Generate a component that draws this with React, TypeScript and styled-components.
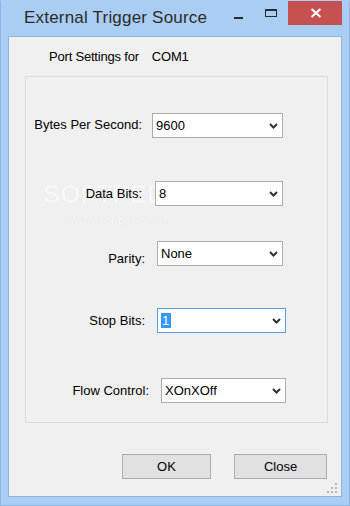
import React from "react";
import styled, { createGlobalStyle } from "styled-components";

const GlobalStyle = createGlobalStyle`
  html, body { margin: 0; padding: 0; background: #ffffff; }
  body { font-family: "Liberation Sans", Arial, sans-serif; }
  * { box-sizing: border-box; }
`;

const Window = styled.div`
  width: 350px;
  height: 506px;
  background: #aacdf3;
  border: 1px solid #8db5e3;
  border-top-color: #aacdf3;
  padding: 0 7px 8px 7px;
  display: flex;
  flex-direction: column;
`;

const TitleBar = styled.div`
  height: 35px;
  display: flex;
  align-items: flex-start;
`;

const Title = styled.div`
  margin: 7px 0 0 16px;
  font-family: "Liberation Sans", Arial, sans-serif;
  font-size: 17px;
  line-height: 20px;
  color: #2b2b2b;
  white-space: nowrap;
  letter-spacing: 0.2px;
`;

const CaptionButtons = styled.div`
  margin-left: auto;
  display: flex;
  align-items: flex-start;
`;

const CaptionButton = styled.div<{ $w: number; $danger?: boolean }>`
  width: ${(p) => p.$w}px;
  height: 24px;
  background: ${(p) => (p.$danger ? "#c75050" : "transparent")};
  display: flex;
`;

const Client = styled.div`
  flex: 1;
  position: relative;
  background: #f0f0f0;
  border: 1px solid #8fb4de;
  padding: 12px 0 0 16px;
  display: flex;
  flex-direction: column;
  font-family: "Liberation Sans", Arial, sans-serif;
  font-size: 13px;
  color: #000;
`;

const Header = styled.div`
  margin-left: 24px;
  height: 16px;
  line-height: 16px;
  display: flex;
  gap: 13px;
  letter-spacing: -0.2px;
`;

const GroupBox = styled.div`
  position: relative;
  z-index: 1;
  margin-top: 11px;
  width: 303px;
  height: 347px;
  border: 1px solid #dcdcdc;
  display: flex;
  flex-direction: column;
`;

const Row = styled.div<{ $top: number }>`
  margin-top: ${(p) => p.$top}px;
  height: 25px;
  display: flex;
  align-items: center;
`;

const Label = styled.div<{ $w: number; $dy: number }>`
  width: ${(p) => p.$w}px;
  text-align: right;
  white-space: nowrap;
  line-height: 16px;
  position: relative;
  top: ${(p) => p.$dy}px;
`;

const Combo = styled.div<{ $ml: number; $w: number; $focus?: boolean }>`
  margin-left: ${(p) => p.$ml}px;
  width: ${(p) => p.$w}px;
  height: 25px;
  background: #ffffff;
  border: 1px solid ${(p) => (p.$focus ? "#569de5" : "#acacac")};
  display: flex;
  align-items: center;
  justify-content: space-between;
  padding: 0 4px 0 3px;
  line-height: 16px;
`;

const Selected = styled.span`
  background: #3399ff;
  color: #ffffff;
  padding: 0 2px 0 1px;
`;

const ButtonRow = styled.div`
  margin: 31px 0 0 97px;
  display: flex;
  gap: 23px;
`;

const Button = styled.div<{ $w: number }>`
  width: ${(p) => p.$w}px;
  height: 25px;
  background: #e1e1e1;
  border: 1px solid #adadad;
  display: flex;
  align-items: center;
  justify-content: center;
  font-size: 13px;
`;

const Watermark = styled.div`
  position: absolute;
  z-index: 0;
  left: 34px;
  top: 143px;
  pointer-events: none;
  display: flex;
  flex-direction: column;
  align-items: flex-start;
`;

const WmBig = styled.div`
  font-family: "Liberation Sans", Arial, sans-serif;
  font-weight: bold;
  font-size: 26px;
  color: rgba(255, 255, 255, 0.8);
  text-shadow: 0 0 1px rgba(0, 0, 0, 0.1);
  line-height: 28px;
  sup {
    font-size: 8px;
    vertical-align: top;
    font-weight: normal;
    margin-left: 2px;
  }
`;

const WmSmall = styled.div`
  margin: 6px 0 0 27px;
  font-family: "Liberation Sans", sans-serif;
  font-size: 11px;
  color: rgba(255, 255, 255, 0.85);
  text-shadow: 0 0 1px rgba(0, 0, 0, 0.12);
  letter-spacing: 0.5px;
`;

const Grip = styled.div`
  position: absolute;
  right: 2px;
  bottom: 1px;
  display: flex;
`;

const Chevron = () => (
  <svg width="9" height="6" viewBox="0 0 9 6">
    <path d="M1 1 L4.5 4.5 L8 1" fill="none" stroke="#333" strokeWidth="2" />
  </svg>
);

type RowDef = {
  label: string;
  value: string;
  top: number;
  labelW: number;
  comboMl: number;
  comboW: number;
  dy: number;
  focus?: boolean;
};

const rows: RowDef[] = [
  { label: "Bytes Per Second:", value: "9600", top: 36, labelW: 116, comboMl: 10, comboW: 131, dy: -1 },
  { label: "Data Bits:", value: "8", top: 43, labelW: 116, comboMl: 13, comboW: 128, dy: 0 },
  { label: "Parity:", value: "None", top: 35, labelW: 119, comboMl: 12, comboW: 126, dy: 5 },
  { label: "Stop Bits:", value: "1", top: 42, labelW: 119, comboMl: 12, comboW: 129, dy: 0, focus: true },
  { label: "Flow Control:", value: "XOnXOff", top: 45, labelW: 123, comboMl: 12, comboW: 125, dy: 0 },
];

export default function App() {
  return (
    <>
      <GlobalStyle />
      <Window>
        <TitleBar>
          <Title>External Trigger Source</Title>
          <CaptionButtons>
            <CaptionButton $w={29}>
              <svg width="29" height="24" viewBox="0 0 29 24">
                <rect x="10" y="16" width="9" height="2" fill="#2b2b2b" />
              </svg>
            </CaptionButton>
            <CaptionButton $w={35}>
              <svg width="35" height="24" viewBox="0 0 35 24">
                <rect x="12.5" y="8.5" width="11" height="7" fill="none" stroke="#2b2b2b" strokeWidth="1" />
                <rect x="12" y="8" width="12" height="2" fill="#2b2b2b" />
              </svg>
            </CaptionButton>
            <CaptionButton $w={54} $danger>
              <svg width="54" height="24" viewBox="0 0 54 24">
                <path d="M23.5 8 L32.5 16 M32.5 8 L23.5 16" stroke="#ffffff" strokeWidth="2" />
              </svg>
            </CaptionButton>
          </CaptionButtons>
        </TitleBar>
        <Client>
          <Watermark>
            <WmBig>
              SOFTPEDIA<sup>™</sup>
            </WmBig>
            <WmSmall>www.softpedia.com</WmSmall>
          </Watermark>
          <Header>
            <span>Port Settings for</span>
            <span>COM1</span>
          </Header>
          <GroupBox>
            {rows.map((r) => (
              <Row key={r.label} $top={r.top}>
                <Label $w={r.labelW} $dy={r.dy}>{r.label}</Label>
                <Combo $ml={r.comboMl} $w={r.comboW} $focus={r.focus}>
                  <span>{r.focus ? <Selected>{r.value}</Selected> : r.value}</span>
                  <Chevron />
                </Combo>
              </Row>
            ))}
          </GroupBox>
          <ButtonRow>
            <Button $w={89}>OK</Button>
            <Button $w={93}>Close</Button>
          </ButtonRow>
          <Grip>
            <svg width="12" height="12" viewBox="0 0 12 12">
              <g fill="#b9b9b9">
                <rect x="8" y="0" width="2" height="2" />
                <rect x="4" y="4" width="2" height="2" />
                <rect x="8" y="4" width="2" height="2" />
                <rect x="0" y="8" width="2" height="2" />
                <rect x="4" y="8" width="2" height="2" />
                <rect x="8" y="8" width="2" height="2" />
              </g>
            </svg>
          </Grip>
        </Client>
      </Window>
    </>
  );
}
